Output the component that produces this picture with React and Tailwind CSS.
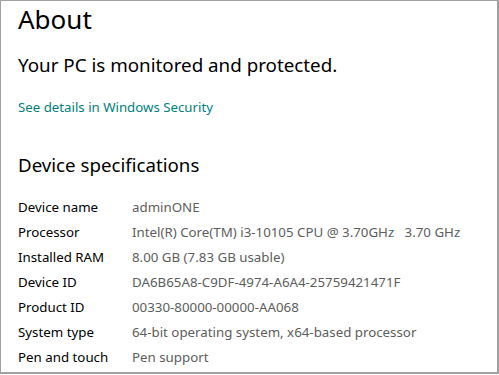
export default function App() {
  const rows = [
    ["Device name", "adminONE"],
    ["Processor", "Intel(R) Core(TM) i3-10105 CPU @ 3.70GHz   3.70 GHz"],
    ["Installed RAM", "8.00 GB (7.83 GB usable)"],
    ["Device ID", "DA6B65A8-C9DF-4974-A6A4-25759421471F"],
    ["Product ID", "00330-80000-00000-AA068"],
    ["System type", "64-bit operating system, x64-based processor"],
    ["Pen and touch", "Pen support"],
  ];
  return (
    <div className="w-[499px] h-[375px] bg-white overflow-hidden">
      <div className="w-[499px] h-[374px] border-t border-l border-r-2 border-b-2 border-[#a0a0a0] pl-[17px] text-black" style={{ fontFamily: '"Noto Sans", sans-serif' }}>
        <div className="text-[26px] leading-[36px]">About</div>
        <div className="text-[18.8px] leading-[28px] mt-[14px]">Your PC is monitored and protected.</div>
        <div className="text-[13.25px] leading-[20px] mt-[18px] text-[#00807c]">See details in Windows Security</div>
        <div className="text-[18.7px] leading-[28px] mt-[34px]">Device specifications</div>
        <div className="mt-[16px] flex flex-col text-[13.3px]">
          {rows.map(([k, v]) => (
            <div key={k} className="flex h-[25px] items-center">
              <div className="w-[114px] text-black">{k}</div>
              <div className="text-[#5d5d5d] whitespace-pre">{v}</div>
            </div>
          ))}
        </div>
      </div>
    </div>
  );
}
